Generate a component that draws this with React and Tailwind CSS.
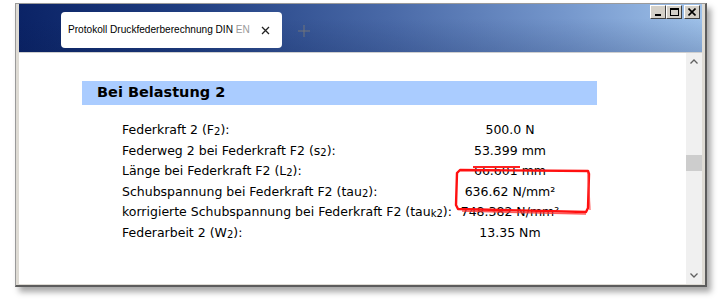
import React from "react";

const rows = [
  { label: "Federkraft 2 (F", sub: "2", value: "500.0 N" },
  { label: "Federweg 2 bei Federkraft F2 (s", sub: "2", value: "53.399 mm" },
  { label: "Länge bei Federkraft F2 (L", sub: "2", value: "66.601 mm" },
  { label: "Schubspannung bei Federkraft F2 (tau", sub: "2", value: "636.62 N/mm²" },
  { label: "korrigierte Schubspannung bei Federkraft F2 (tau", sub: "k2", value: "748.382 N/mm²" },
  { label: "Federarbeit 2 (W", sub: "2", value: "13.35 Nm" },
];

function WinButton({ children }) {
  return (
    <div className="w-[16px] h-[14px] bg-[#d4d0c8] border border-t-white border-l-white border-r-[#404040] border-b-[#404040] flex items-center justify-center">
      {children}
    </div>
  );
}

function App() {
  return (
    <div className="w-[722px] h-[303px] bg-white overflow-hidden relative" style={{ fontFamily: '"DejaVu Sans", sans-serif' }}>
      <div className="ml-[15px] mt-[3px] w-[692px] h-[284px] border-l border-t border-[#9a9a9a] border-r-2 border-b-2 border-r-[#5c5c5c] border-b-[#5c5c5c] bg-[#dedbd4] px-[3px] pb-[1px] flex flex-col shadow-[4px_5px_6px_rgba(0,0,0,0.35)]">
        {/* title bar */}
        <div className="h-[48px] relative shrink-0 bg-[linear-gradient(80deg,#0a2265_0%,#1f3d80_25%,#4a6aa8_55%,#7597cc_80%,#9fc2ea_100%)]">
          <div className="absolute inset-0 bg-[linear-gradient(180deg,rgba(0,0,0,0)_30%,rgba(10,30,80,0.18)_100%)]" />
          <div className="relative flex items-start h-full">
            <div className="ml-[42px] mt-[8px] w-[221px] h-[36px] bg-white rounded-[4px] flex items-center pl-[7px]">
              <span
                className="text-[10.1px] text-black whitespace-nowrap"
                style={{ fontFamily: '"Liberation Sans", Arial, sans-serif' }}
              >
                Protokoll Druckfederberechnung DIN <span className="text-[#9a9a9a]">EN</span>
              </span>
              <svg width="9" height="9" viewBox="0 0 9 9" className="ml-auto mr-[12px]">
                <path d="M1 1L8 8M8 1L1 8" stroke="#222" strokeWidth="1.3" />
              </svg>
            </div>
            <svg width="12" height="12" viewBox="0 0 12 12" className="ml-[16px] mt-[21px] opacity-70">
              <path d="M6 0V12M0 6H12" stroke="#8c8471" strokeWidth="1" />
            </svg>
            <div className="ml-auto mr-[2px] mt-[1px] flex">
              <WinButton>
                <div className="w-[6px] h-[2px] bg-black mt-[6px]" />
              </WinButton>
              <WinButton>
                <div className="w-[9px] h-[8px] border border-black border-t-2" />
              </WinButton>
              <div className="w-[2px]" />
              <WinButton>
                <svg width="8" height="8" viewBox="0 0 8 8">
                  <path d="M0.5 0.5L7.5 7.5M7.5 0.5L0.5 7.5" stroke="#000" strokeWidth="1.6" />
                </svg>
              </WinButton>
            </div>
          </div>
        </div>
        <div className="h-[1px] bg-[#cfcfcf] shrink-0" />
        {/* content */}
        <div className="flex-1 bg-white flex relative">
          <div className="flex-1 pt-[28px]">
            <div className="ml-[63px] w-[515px] h-[24px] bg-[#aaccff] flex items-center pl-[15px]">
              <span className="text-[14.5px] font-semibold text-black">Bei Belastung 2</span>
            </div>
            <div className="mt-[15px] ml-[103px] grid grid-cols-[335px_106px] text-[12.5px] text-black leading-[20.6px]">
              {rows.map((r) => (
                <React.Fragment key={r.label}>
                  <div className="whitespace-nowrap">
                    {r.label}
                    <sub className="text-[10px] relative top-[1px]">{r.sub}</sub>):
                  </div>
                  <div className="text-center whitespace-nowrap">{r.value}</div>
                </React.Fragment>
              ))}
            </div>
          </div>
          {/* scrollbar */}
          <div className="w-[16px] bg-[#f0f0f0] flex flex-col items-center justify-between py-[6px]">
            <svg width="8" height="5" viewBox="0 0 8 5">
              <path d="M0.5 4.5L4 1L7.5 4.5" stroke="#606060" strokeWidth="1.3" fill="none" />
            </svg>
            <svg width="8" height="5" viewBox="0 0 8 5">
              <path d="M0.5 0.5L4 4L7.5 0.5" stroke="#606060" strokeWidth="1.3" fill="none" />
            </svg>
          </div>
          <div className="absolute right-0 top-[102px] w-[16px] h-[16px] bg-[#cdcdcd]" />
        </div>
      </div>
      {/* hand-drawn red annotation */}
      <svg className="absolute left-0 top-0 pointer-events-none" width="722" height="303">
        <path
          d="M460 170 L588 171 L589 174 L588 208 L586 212 L458 209 L456 205 L457 173 Z"
          stroke="#ff1010"
          strokeWidth="2.4"
          fill="none"
          strokeLinejoin="round"
        />
        <path d="M473 167 L520 167" stroke="#ff2020" strokeWidth="1.8" fill="none" />
        <path d="M462 211 L586 214" stroke="#ff3030" strokeWidth="1.6" fill="none" opacity="0.8" />
        <path d="M588 173 L590 210" stroke="#ff3030" strokeWidth="1.4" fill="none" opacity="0.7" />
      </svg>
    </div>
  );
}

export default App;
